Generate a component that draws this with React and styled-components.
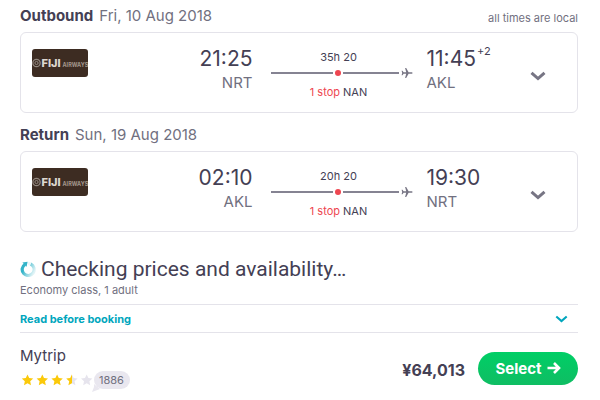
import React from "react";
import styled, { createGlobalStyle } from "styled-components";

const ink = "#444054";
const muted = "#717080";
const line = "#e4e3ea";
const teal = "#00a6bd";
const red = "#ee4650";

const GlobalStyle = createGlobalStyle`
  *, *::before, *::after { box-sizing: border-box; }
  body {
    margin: 0;
    background: #fff;
    color: ${ink};
    font-family: Inter, "Liberation Sans", sans-serif;
    font-size: 12px;
  }
  h1, h2, h3, p { margin: 0; font-weight: 400; }
  button { font-family: inherit; border: 0; padding: 0; background: none; cursor: pointer; }
  svg { display: block; }
`;

const Page = styled.main`
  padding: 6px 22px 8px 20px;
`;

const Leg = styled.section`
  margin-bottom: 12px;
`;

const LegHeader = styled.header`
  display: flex;
  justify-content: space-between;
  align-items: flex-end;
  height: 20px;
  margin-bottom: 6px;
`;

const LegTitle = styled.h2`
  font-size: 15px;
  line-height: 20px;
  color: ${muted};
  white-space: nowrap;

  strong {
    color: ${ink};
    font-weight: 700;
    margin-right: 6px;
  }
`;

const Note = styled.p`
  font-size: 11px;
  line-height: 16px;
  color: ${muted};
`;

const Card = styled.article`
  display: grid;
  grid-template-columns: 56px 73fr 142px 47fr 16px;
  border: 1px solid ${line};
  border-radius: 6px;
  padding: 13px 31px 13px 11px;
`;

const Logo = styled.svg`
  width: 56px;
  height: 28px;
  margin-top: 3px;
  border-radius: 3px;
`;

const Stop = styled.div`
  display: flex;
  flex-direction: column;
  align-items: ${(p) => (p.$end ? "flex-end" : "flex-start")};
  margin: ${(p) => (p.$end ? "0 18px 0 0" : "0 0 0 14px")};
`;

const Time = styled.time`
  display: flex;
  font-size: 21px;
  line-height: 26px;
  color: ${ink};

  sup {
    font-size: 11px;
    line-height: 10px;
    margin-left: 1px;
  }
`;

const Airport = styled.span`
  font-size: 15px;
  line-height: 22px;
  color: ${muted};
`;

const Route = styled.div`
  display: flex;
  flex-direction: column;
  font-size: 11px;
  line-height: 14px;
  padding-top: 4px;
`;

const RouteText = styled.p`
  width: 136px;
  text-align: center;

  em {
    font-style: normal;
    color: ${red};
  }
`;

const Track = styled.div`
  display: flex;
  align-items: center;
  height: 18px;
  margin-bottom: 3px;
`;

const Segment = styled.span`
  flex: ${(p) => p.$grow} 1 0;
  height: 2px;
  background: #858392;
`;

const Dot = styled.span`
  width: 6px;
  height: 6px;
  margin: 0 2px;
  border-radius: 50%;
  background: ${red};
`;

const PlaneIcon = styled.svg`
  width: 12px;
  height: 12px;
  margin-left: 2px;
`;

const Expand = styled.button`
  align-self: center;
  margin-top: 6px;
`;

const Status = styled.section`
  padding-top: 12px;
`;

const StatusTitle = styled.h1`
  display: flex;
  align-items: center;
  gap: 5px;
  font-family: Roboto, Inter, sans-serif;
  font-size: 21px;
  line-height: 26px;
  color: ${ink};
`;

const Details = styled.button`
  display: flex;
  justify-content: space-between;
  align-items: center;
  width: 100%;
  height: 29px;
  margin-top: 6px;
  padding-right: 10px;
  border-top: 1px solid ${line};
  border-bottom: 1px solid ${line};
  font-size: 11px;
  font-weight: 700;
  color: ${teal};
`;

const Offer = styled.section`
  display: flex;
  align-items: center;
  padding-top: 13px;
`;

const Seller = styled.div`
  flex: 1;
`;

const SellerName = styled.h3`
  font-size: 15px;
  line-height: 20px;
`;

const Rating = styled.div`
  display: flex;
  align-items: center;
  height: 20px;
  margin-top: 4px;
`;

const Bubble = styled.span`
  position: relative;
  height: 18px;
  padding: 0 6px 0 5px;
  border-radius: 9px;
  background: #e9e7ef;
  color: ${muted};
  font-size: 11px;
  line-height: 18px;

  svg {
    position: absolute;
    left: -2px;
    bottom: -3px;
  }
`;

const Price = styled.strong`
  font-size: 16px;
  line-height: 20px;
  font-weight: 700;
  padding-top: 4px;
`;

const Select = styled.button`
  display: flex;
  align-items: center;
  justify-content: center;
  gap: 5px;
  width: 100px;
  height: 33px;
  margin-left: 13px;
  border-radius: 17px;
  background: linear-gradient(#00cf66, #0fbd63);
  color: #fff;
  font-size: 15px;
  font-weight: 700;
`;

function AirlineLogo() {
  return (
    <Logo viewBox="0 0 56 28" role="img" aria-label="Fiji Airways">
      <rect width="56" height="28" fill="#3d2c22" />
      <circle cx="4.5" cy="14" r="3.7" fill="none" stroke="#92877f" strokeWidth="1.2" />
      <circle cx="4.5" cy="14" r="1.6" fill="none" stroke="#92877f" strokeWidth="1" />
      <text x="9.5" y="18" fill="#dcd6d0" fontSize="11" fontWeight="800">FIJI</text>
      <text x="30.5" y="18" fill="#a3978c" fontSize="5.5" fontWeight="700">AIRWAYS</text>
    </Logo>
  );
}

function Plane() {
  return (
    <PlaneIcon viewBox="0 0 12 12" fill="#777584">
      <path d="M11.6 6c0 .5-.5.8-1.2.8H7.6L5.2 11H4.1l1.1-4.2H2.6L1.5 8.3H.6L1.2 6 .6 3.7h.9l1.1 1.5h2.6L4.1 1h1.1l2.4 4.2h2.8c.7 0 1.2.3 1.2.8z" />
    </PlaneIcon>
  );
}

function Chevron({ width, height, color, stroke }) {
  return (
    <svg width={width} height={height} viewBox="0 0 16 10" fill="none" stroke={color} strokeWidth={stroke} aria-hidden="true">
      <path d="M1.5 1.8L8 7.6l6.5-5.8" />
    </svg>
  );
}

function Spinner() {
  return (
    <svg width="16" height="16" viewBox="0 0 16 16" fill="none" strokeWidth="3.2" aria-hidden="true">
      <defs>
        <linearGradient id="sweep" x1="0" y1="0.2" x2="1" y2="0.7">
          <stop offset="0.2" stopColor="#35b4c9" />
          <stop offset="0.6" stopColor="#8fd6e1" />
          <stop offset="1" stopColor="#e0f3f6" />
        </linearGradient>
      </defs>
      <path d="M5.2 3.3a6 6 0 1 0 5.4-.3" stroke="url(#sweep)" />
      <path d="M10.6 3A6 6 0 0 0 8 2.3" stroke="#edf8fa" />
      <path d="M2.4 1.6L7.6.8 6.6 5.8z" fill="#35b4c9" />
    </svg>
  );
}

const starPath = "M6 .4l1.7 3.7 4 .5-3 2.7.8 4L6 9.3l-3.5 2 .8-4-3-2.7 4-.5z";

function Stars() {
  return (
    <svg width="74" height="12" viewBox="0 0 74 12" role="img" aria-label="3.5 out of 5 stars">
      <defs>
        <linearGradient id="half">
          <stop offset="0.55" stopColor="#fbc90a" />
          <stop offset="0.55" stopColor="#e6e4ed" />
        </linearGradient>
      </defs>
      {["#fbc90a", "#fbc90a", "#fbc90a", "url(#half)", "#e6e4ed"].map((fill, i) => (
        <path key={i} d={starPath} fill={fill} transform={`translate(${1.5 + i * 14.8} 0)`} />
      ))}
    </svg>
  );
}

function Flight({ title, date, note, from, to, depart, arrive, plus, duration }) {
  return (
    <Leg>
      <LegHeader>
        <LegTitle><strong>{title}</strong>{date}</LegTitle>
        {note && <Note>{note}</Note>}
      </LegHeader>
      <Card>
        <AirlineLogo />
        <Stop $end>
          <Time>{depart}</Time>
          <Airport>{from}</Airport>
        </Stop>
        <Route>
          <RouteText>{duration}</RouteText>
          <Track>
            <Segment $grow={63} />
            <Dot />
            <Segment $grow={56} />
            <Plane />
          </Track>
          <RouteText><em>1 stop</em> NAN</RouteText>
        </Route>
        <Stop>
          <Time>{arrive}{plus && <sup>{plus}</sup>}</Time>
          <Airport>{to}</Airport>
        </Stop>
        <Expand type="button" aria-label={`Show ${title.toLowerCase()} details`}>
          <Chevron width={16} height={10} color="#777584" stroke={3} />
        </Expand>
      </Card>
    </Leg>
  );
}

export default function App() {
  return (
    <>
      <GlobalStyle />
      <Page>
        <Flight title="Outbound" date="Fri, 10 Aug 2018" note="all times are local" from="NRT" to="AKL" depart="21:25" arrive="11:45" plus="+2" duration="35h 20" />
        <Flight title="Return" date="Sun, 19 Aug 2018" from="AKL" to="NRT" depart="02:10" arrive="19:30" duration="20h 20" />
        <Status>
          <StatusTitle><Spinner />Checking prices and availability…</StatusTitle>
          <Note>Economy class, 1 adult</Note>
          <Details type="button">
            Read before booking
            <Chevron width={13} height={8} color={teal} stroke={2.6} />
          </Details>
        </Status>
        <Offer>
          <Seller>
            <SellerName>Mytrip</SellerName>
            <Rating>
              <Stars />
              <Bubble>
                <svg width="8" height="8" viewBox="0 0 8 8" aria-hidden="true">
                  <path d="M2 0v3L0 8l8-3z" fill="#e9e7ef" />
                </svg>
                1886
              </Bubble>
            </Rating>
          </Seller>
          <Price>¥64,013</Price>
          <Select type="button">
            Select
            <svg width="14" height="12" viewBox="0 0 14 12" fill="none" stroke="#fff" strokeWidth="2.6" aria-hidden="true">
              <path d="M.5 6h11.5M7 1l5 5-5 5" />
            </svg>
          </Select>
        </Offer>
      </Page>
    </>
  );
}
